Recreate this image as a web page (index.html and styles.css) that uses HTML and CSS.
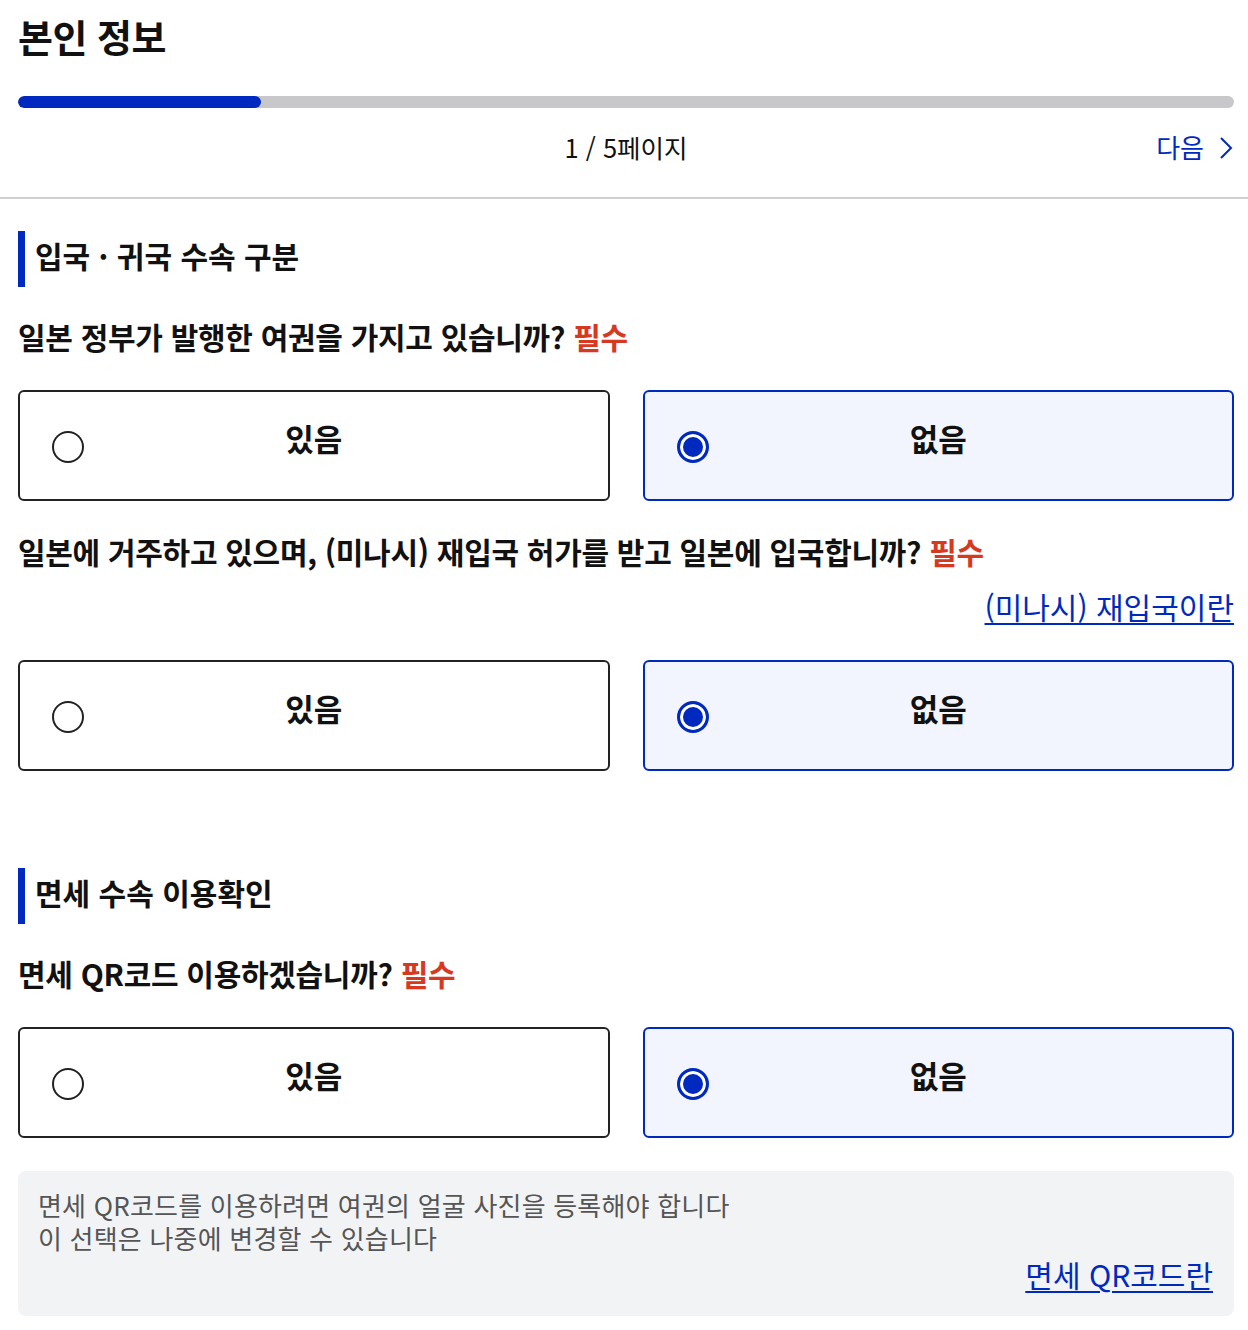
FILE: index.html
```html
<!DOCTYPE html>
<html lang="ko">
<head>
<meta charset="utf-8">
<title>본인 정보</title>
<link rel="stylesheet" href="styles.css">
</head>
<body>
<header class="top">
  <h1 class="title">본인 정보</h1>
  <div class="progress"><div class="progress-fill" style="width:20%"></div></div>
  <div class="pager">
    <span class="pager-count">1 / 5페이지</span>
    <a class="pager-next" href="#">다음
      <svg class="chev" viewBox="0 0 16 24" width="16" height="24"><path d="M3 2 L13 12 L3 22" fill="none" stroke="currentColor" stroke-width="2"/></svg>
    </a>
  </div>
</header>

<main class="content">
  <section class="section">
    <h2 class="sec-head">입국 · 귀국 수속 구분</h2>

    <p class="question">일본 정부가 발행한 여권을 가지고 있습니까? <span class="req">필수</span></p>
    <div class="choices">
      <label class="card"><span class="radio"></span><span class="label">있음</span></label>
      <label class="card selected"><span class="radio"></span><span class="label">없음</span></label>
    </div>

    <p class="question q2">일본에 거주하고 있으며, (미나시) 재입국 허가를 받고 일본에 입국합니까? <span class="req">필수</span></p>
    <div class="link-row"><a class="link" href="#">(미나시) 재입국이란</a></div>
    <div class="choices">
      <label class="card"><span class="radio"></span><span class="label">있음</span></label>
      <label class="card selected"><span class="radio"></span><span class="label">없음</span></label>
    </div>
  </section>

  <section class="section sec2">
    <h2 class="sec-head">면세 수속 이용확인</h2>

    <p class="question">면세 QR코드 이용하겠습니까? <span class="req">필수</span></p>
    <div class="choices">
      <label class="card"><span class="radio"></span><span class="label">있음</span></label>
      <label class="card selected"><span class="radio"></span><span class="label">없음</span></label>
    </div>

    <div class="info">
      <p class="info-text">면세 QR코드를 이용하려면 여권의 얼굴 사진을 등록해야 합니다<br>이 선택은 나중에 변경할 수 있습니다</p>
      <div class="info-link-row"><a class="link" href="#">면세 QR코드란</a></div>
    </div>
  </section>
</main>
</body>
</html>
```

FILE: styles.css
```css
* { box-sizing: border-box; }
body {
  margin: 0;
  background: #fff;
  color: #111;
  font-family: "Noto Sans CJK KR", "Noto Sans", sans-serif;
}
.top {
  padding: 12px 14px 0 18px;
  border-bottom: 2px solid #cfcfd1;
}
.title {
  margin: 0;
  font-size: 38px;
  line-height: 48px;
  font-weight: 700;
  letter-spacing: -0.5px;
}
.progress {
  margin-top: 36px;
  height: 12px;
  border-radius: 6px;
  background: #c8c8ca;
  overflow: hidden;
}
.progress-fill {
  height: 100%;
  background: #0029bf;
  border-radius: 6px;
}
.pager {
  display: grid;
  grid-template-columns: 1fr auto 1fr;
  align-items: center;
  margin-top: 21px;
  padding-bottom: 32px;
}
.pager-count {
  grid-column: 2;
  font-size: 25.5px;
  line-height: 36px;
  color: #111;
}
.pager-next {
  justify-self: end;
  display: flex;
  align-items: center;
  gap: 14px;
  color: #0029bf;
  text-decoration: none;
  font-size: 26px;
  line-height: 36px;
}
.chev { display: block; margin-top: 2px; }
.content {
  padding: 32px 14px 0 18px;
}
.section.sec2 { margin-top: 97px; }
.sec-head {
  margin: 0;
  height: 56px;
  border-left: 7px solid #0029bf;
  padding-left: 10px;
  padding-bottom: 8px;
  display: flex;
  align-items: center;
  font-size: 30px;
  font-weight: 700;
}
.question {
  margin: 29px 0 0;
  font-size: 30px;
  line-height: 40px;
  font-weight: 700;
  letter-spacing: -0.3px;
}
.question.q2 { margin-top: 30px; }
.req { color: #d6391f; }
.link-row, .info-link-row {
  display: flex;
  justify-content: flex-end;
}
.link-row { margin-top: 15px; }
.link {
  color: #0029bf;
  font-size: 30px;
  line-height: 40px;
  text-decoration: underline;
  text-underline-offset: 4px;
  text-decoration-thickness: 2px;
}
.choices {
  margin-top: 34px;
  display: grid;
  grid-template-columns: 1fr 1fr;
  gap: 33px;
}
.card {
  height: 111px;
  border: 2px solid #222;
  border-radius: 6px;
  background: #fff;
  display: grid;
  grid-template-columns: 1fr auto 1fr;
  align-items: center;
  padding: 0 32px;
  cursor: pointer;
}
.card.selected {
  border-color: #0029bf;
  background: #f2f5fe;
}
.radio {
  justify-self: start;
  width: 32px;
  height: 32px;
  border-radius: 50%;
  border: 2px solid #222;
  background: #fff;
  margin-top: 2px;
}
.card.selected .radio {
  border: 3px solid #0029bf;
  background: #0029bf;
  box-shadow: inset 0 0 0 3px #fff;
}
.label {
  font-size: 31px;
  font-weight: 700;
  line-height: 40px;
  padding-bottom: 16px;
}
.info {
  margin-top: 33px;
  background: #f2f3f5;
  border-radius: 8px;
  padding: 17px 21px 22px 20px;
}
.info-text {
  margin: 0;
  font-size: 26px;
  line-height: 33px;
  color: #555;
  letter-spacing: 0.2px;
}
```
